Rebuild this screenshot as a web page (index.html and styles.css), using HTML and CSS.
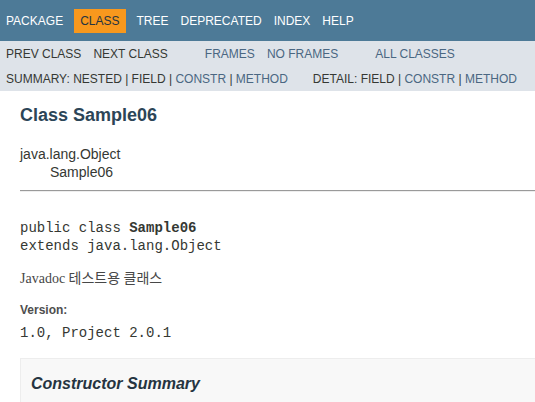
FILE: index.html
```html
<!DOCTYPE html>
<html lang="ko">
<head>
<meta charset="utf-8">
<title>Sample06</title>
<link rel="stylesheet" href="styles.css">
</head>
<body>
<div class="top-nav">
  <ul class="nav-list">
    <li><a href="#">Package</a></li>
    <li class="current">Class</li>
    <li><a href="#">Tree</a></li>
    <li><a href="#">Deprecated</a></li>
    <li><a href="#">Index</a></li>
    <li><a href="#">Help</a></li>
  </ul>
</div>
<div class="sub-nav">
  <div class="sub-row">
    <ul class="nav-list group">
      <li>Prev Class</li>
      <li>Next Class</li>
    </ul>
    <ul class="nav-list group">
      <li><a href="#">Frames</a></li>
      <li><a href="#">No Frames</a></li>
    </ul>
    <ul class="nav-list group">
      <li><a href="#">All Classes</a></li>
    </ul>
  </div>
  <div class="sub-row2">
    <ul class="sub-list">
      <li>Summary:&nbsp;</li>
      <li>Nested&nbsp;|&nbsp;</li>
      <li>Field&nbsp;|&nbsp;</li>
      <li><a href="#">Constr</a>&nbsp;|&nbsp;</li>
      <li><a href="#">Method</a></li>
    </ul>
    <ul class="sub-list">
      <li>Detail:&nbsp;</li>
      <li>Field&nbsp;|&nbsp;</li>
      <li><a href="#">Constr</a>&nbsp;|&nbsp;</li>
      <li><a href="#">Method</a></li>
    </ul>
  </div>
</div>
<div class="header">
  <h2 class="title">Class Sample06</h2>
</div>
<div class="content">
  <div class="inheritance">
    <div class="inh-root">java.lang.Object</div>
    <div class="inh-child">Sample06</div>
  </div>
  <hr class="rule">
  <pre class="signature">public class <span class="type-name">Sample06</span>
extends java.lang.Object</pre>
  <div class="block">Javadoc 테스트용 클래스</div>
  <dl class="tags">
    <dt>Version:</dt>
    <dd>1.0, Project 2.0.1</dd>
  </dl>
  <div class="summary-box">
    <h3 class="summary-title">Constructor Summary</h3>
    <div class="summary-body"></div>
  </div>
</div>
</body>
</html>
```

FILE: styles.css
```css
html, body {
  margin: 0;
  padding: 0;
}
body {
  background: #ffffff;
  color: #353833;
  font-family: "Liberation Sans", Arial, sans-serif;
  font-size: 14px;
  overflow: hidden;
}
a {
  color: #4A6782;
  text-decoration: none;
}
ul {
  list-style: none;
  margin: 0;
  padding: 0;
}

.top-nav {
  background: #4D7A97;
  height: 41px;
  box-sizing: border-box;
  padding-top: 9px;
  font-size: 12px;
  line-height: 14px;
}
.nav-list {
  display: flex;
}
.top-nav .nav-list li {
  padding: 5px 6px;
  text-transform: uppercase;
  color: #ffffff;
}
.top-nav .nav-list a {
  color: #ffffff;
}
.top-nav .nav-list li.current {
  background: #F8981D;
  color: #253441;
  margin: 0 5px;
}

.sub-nav {
  background: #dee3e9;
  font-size: 12px;
  line-height: 14px;
  text-transform: uppercase;
}
.sub-row {
  display: flex;
}
.sub-row .group {
  margin-right: 25px;
}
.sub-row .group li {
  padding: 6px 6px 5px;
}
.sub-row2 {
  display: flex;
  padding: 6px 0 5px 6px;
}
.sub-list {
  display: flex;
  margin-right: 25px;
  white-space: nowrap;
}

.header {
  padding: 5px 0 0 20px;
}
.title {
  margin: 9px 0 10px;
  font-size: 18px;
  line-height: 20px;
  font-weight: bold;
  color: #2c4557;
}

.content {
  padding: 11px 0 10px 20px;
}
.inheritance {
  font-size: 14px;
  line-height: 16px;
}
.inh-child {
  padding: 2px 0 0 30px;
}
.rule {
  margin: 10px 0 0;
  border: 0;
  border-top: 1px solid #9a9a9a;
  border-bottom: 1px solid #eeeeee;
  height: 0;
}
.signature {
  margin: 27px 0 0;
  font-family: "Liberation Mono", "Courier New", monospace;
  font-size: 14px;
  line-height: 18.4px;
  color: #353833;
}
.type-name {
  font-weight: bold;
}
.block {
  margin: 13px 0 0;
  font-family: "Liberation Serif", "Times New Roman", "Noto Sans CJK KR", serif;
  font-size: 14px;
  line-height: 19px;
  color: #474747;
}
.tags {
  margin: 15px 0 0;
}
.tags dt {
  font-size: 12px;
  line-height: 14px;
  font-weight: bold;
  color: #4E4E4E;
}
.tags dd {
  margin: 7px 0 0;
  font-family: "Liberation Mono", "Courier New", monospace;
  font-size: 14px;
  line-height: 18px;
}
.summary-box {
  margin: 16px 0 0;
  border: 1px solid #ededed;
  border-right-width: 0;
  background: #f8f8f8;
  padding: 0 20px 5px 10px;
}
.summary-title {
  margin: 15px 0 0;
  font-size: 16px;
  line-height: 20px;
  font-style: italic;
  font-weight: bold;
  color: #253441;
}
.summary-body {
  height: 10px;
}
```
